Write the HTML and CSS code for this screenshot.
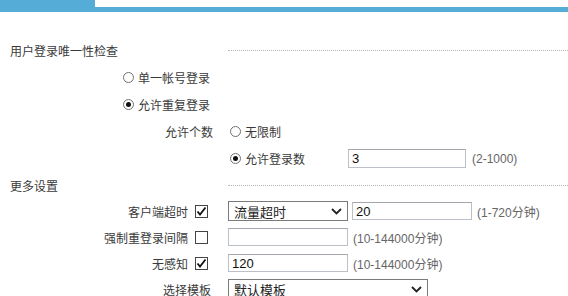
FILE: index.html
```html
<!DOCTYPE html>
<html lang="zh-CN">
<head>
    <meta charset="UTF-8">
    <title>用户登录设置</title>
    <link rel="stylesheet" href="styles.css">
</head>
<body>
    <div class="topbar">
        <div class="tab"></div>
        <div class="bar"></div>
    </div>

    <div class="form">
        <div class="section-title">
            <span class="title-text">用户登录唯一性检查</span>
            <i class="rule"></i>
        </div>

        <div class="row opt-row">
            <label class="opt"><span class="radio"></span>单一帐号登录</label>
        </div>
        <div class="row opt-row">
            <label class="opt"><span class="radio on"></span>允许重复登录</label>
        </div>
        <div class="row sub-row">
            <span class="sub-label">允许个数</span>
            <label class="opt"><span class="radio"></span>无限制</label>
        </div>
        <div class="row sub-row">
            <span class="sub-label"></span>
            <label class="opt opt-wide"><span class="radio on"></span>允许登录数</label>
            <input class="field field-short" type="text" value="3">
            <span class="hint">(2-1000)</span>
        </div>

        <div class="section-title section-more">
            <span class="title-text">更多设置</span>
            <i class="rule"></i>
        </div>

        <div class="row setting">
            <span class="set-label">客户端超时</span>
            <span class="check-cell">
                <span class="check"><svg width="11" height="11" viewBox="0 0 11 11"><polyline points="1.5,5.5 4,8.5 9.5,1.5" fill="none" stroke="#111" stroke-width="1.8"/></svg></span>
            </span>
            <div class="select">
                <span>流量超时</span>
                <svg width="11" height="7" viewBox="0 0 11 7"><polyline points="1,1 5.5,5.5 10,1" fill="none" stroke="#222" stroke-width="1.8"/></svg>
            </div>
            <input class="field field-gap" type="text" value="20">
            <span class="hint">(1-720分钟)</span>
        </div>
        <div class="row setting">
            <span class="set-label">强制重登录间隔</span>
            <span class="check-cell"><span class="check"></span></span>
            <input class="field" type="text" value="">
            <span class="hint">(10-144000分钟)</span>
        </div>
        <div class="row setting">
            <span class="set-label">无感知</span>
            <span class="check-cell">
                <span class="check"><svg width="11" height="11" viewBox="0 0 11 11"><polyline points="1.5,5.5 4,8.5 9.5,1.5" fill="none" stroke="#111" stroke-width="1.8"/></svg></span>
            </span>
            <input class="field" type="text" value="120">
            <span class="hint">(10-144000分钟)</span>
        </div>
        <div class="row setting">
            <span class="set-label set-label-wide">选择模板</span>
            <div class="select select-wide">
                <span>默认模板</span>
                <svg width="11" height="7" viewBox="0 0 11 7"><polyline points="1,1 5.5,5.5 10,1" fill="none" stroke="#222" stroke-width="1.8"/></svg>
            </div>
        </div>
    </div>
</body>
</html>
```

FILE: styles.css
```css
body {
    margin: 0;
    font-family: "Liberation Sans", "Noto Sans CJK SC", sans-serif;
    font-size: 12px;
    color: #3a3a3a;
    background: #fff;
}

/* top tab strip */
.tab {
    width: 95px;
    height: 7px;
    background-color: #55acd6;
}

.bar {
    height: 5px;
    background-color: #55acd6;
}

.form {
    padding-top: 25px;
}

.row {
    display: flex;
    align-items: center;
    height: 27px;
}

.section-title {
    display: flex;
    align-items: center;
    height: 27px;
    padding-left: 10px;
}

.section-more {
    height: 26px;
}

.title-text {
    width: 218px;
}

.rule {
    flex: 1;
    border-top: 1px dotted #b5b5b5;
}

/* radio options */
.opt-row,
.sub-row {
    padding-left: 123px;
}

.opt {
    display: flex;
    align-items: center;
    gap: 4px;
}

.opt-wide {
    width: 118px;
}

.radio {
    position: relative;
    width: 11px;
    height: 11px;
    box-sizing: border-box;
    border: 1px solid #707070;
    border-radius: 50%;
    background: #fff;
}

.radio.on::after {
    content: "";
    position: absolute;
    left: 2px;
    top: 2px;
    width: 5px;
    height: 5px;
    border-radius: 50%;
    background: #111;
}

.sub-label {
    width: 90px;
    margin-right: 17px;
    text-align: right;
}

/* text fields */
.field {
    box-sizing: border-box;
    width: 120px;
    height: 18px;
    padding: 0 3px;
    border: 1px solid #bcc1c8;
    border-top-color: #a3a7ad;
    font-family: "Liberation Sans", "Noto Sans CJK SC", sans-serif;
    font-size: 13px;
    color: #111;
    outline: none;
}

.field-short {
    width: 118px;
    height: 19px;
}

.field-gap {
    margin-left: 4px;
}

.hint {
    margin-left: 5px;
    color: #666;
}

.field-short + .hint {
    margin-left: 6px;
}

/* more settings */
.setting {
    height: 26px;
}

.set-label {
    width: 188px;
    text-align: right;
}

.set-label-wide {
    width: 211px;
    margin-right: 17px;
}

.check-cell {
    width: 40px;
    display: flex;
    align-items: center;
}

.check {
    display: flex;
    align-items: center;
    justify-content: center;
    width: 13px;
    height: 13px;
    margin-left: 7px;
    box-sizing: border-box;
    border: 1px solid #444;
    background: #fff;
}

.select {
    box-sizing: border-box;
    display: flex;
    align-items: center;
    justify-content: space-between;
    width: 120px;
    height: 20px;
    padding: 0 5px;
    border: 1px solid #7a7a7a;
    font-size: 13px;
    color: #222;
    background: #fff;
}

.select-wide {
    width: 200px;
}
```
